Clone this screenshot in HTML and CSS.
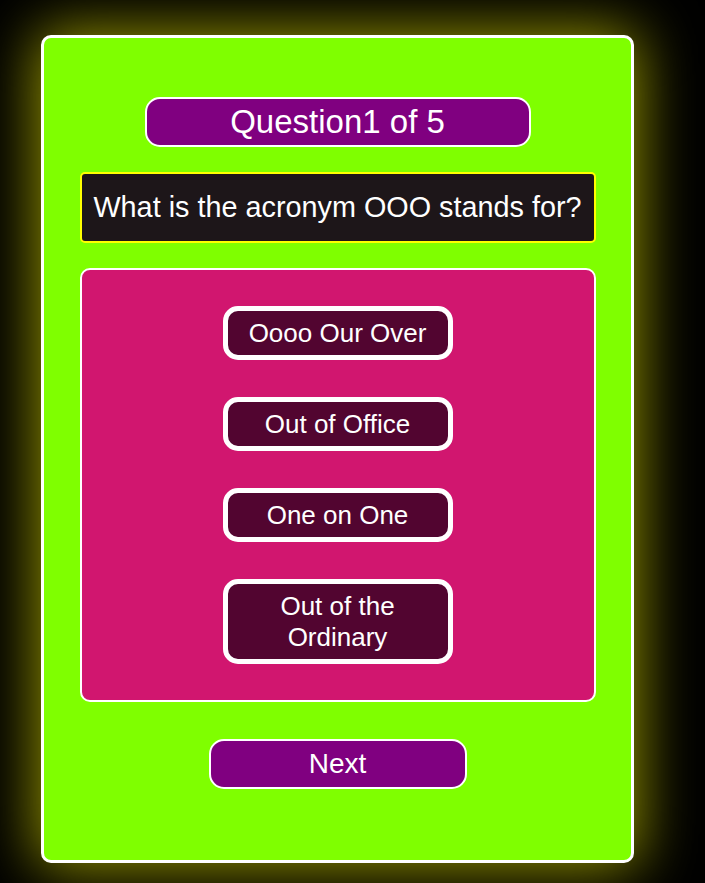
FILE: index.html
```html
<!DOCTYPE html>
<html lang="en">
<head>
<meta charset="utf-8">
<title>Quiz</title>
<link rel="stylesheet" href="styles.css">
</head>
<body>
<main class="card">
  <h1 class="counter">Question1 of 5</h1>
  <div class="question">What is the acronym OOO stands for?</div>
  <div class="answers">
    <button class="answer">Oooo Our Over</button>
    <button class="answer">Out of Office</button>
    <button class="answer">One on One</button>
    <button class="answer">Out of the Ordinary</button>
  </div>
  <button class="next">Next</button>
</main>
</body>
</html>
```
FILE: styles.css
```css
html, body {
  background: #000;
}
body {
  margin: 0;
  padding: 35px 0 60px 41px;
  font-family: "Liberation Sans", Arial, sans-serif;
  color: #fff;
}
.card {
  box-sizing: border-box;
  width: 593px;
  height: 828px;
  background: #7fff00;
  border: 3px solid #fff;
  border-radius: 10px;
  box-shadow: 0 0 60px 4px rgba(255, 255, 0, 0.6);
  padding: 59px 0 0;
  display: flex;
  flex-direction: column;
  align-items: center;
}
.counter {
  box-sizing: border-box;
  margin: 0;
  width: 386px;
  height: 50px;
  background: #800080;
  border: 2px solid #fff;
  border-radius: 15px;
  font-size: 33px;
  font-weight: normal;
  line-height: 45px;
  text-align: center;
}
.question {
  box-sizing: border-box;
  margin-top: 25px;
  width: 516px;
  height: 71px;
  background: #1d1619;
  border: 2px solid #ffff00;
  border-radius: 5px;
  font-size: 28.8px;
  line-height: 67px;
  text-align: center;
  white-space: nowrap;
}
.answers {
  box-sizing: border-box;
  margin-top: 25px;
  width: 516px;
  height: 434px;
  background: #d1166f;
  border: 2px solid #fff;
  border-radius: 10px;
  padding: 36px 0;
  display: flex;
  flex-direction: column;
  align-items: center;
  gap: 37px;
}
.answer {
  box-sizing: border-box;
  width: 230px;
  padding: 7px 12px 6px;
  background: #520530;
  border: 5px solid #fff;
  border-radius: 15px;
  color: #fff;
  font-family: inherit;
  font-size: 26px;
  line-height: 31px;
  text-align: center;
}
.next {
  box-sizing: border-box;
  margin-top: 37px;
  width: 258px;
  height: 50px;
  padding: 0;
  background: #800080;
  border: 2px solid #fff;
  border-radius: 15px;
  color: #fff;
  font-family: inherit;
  font-size: 28px;
  line-height: 46px;
  text-align: center;
}
```
